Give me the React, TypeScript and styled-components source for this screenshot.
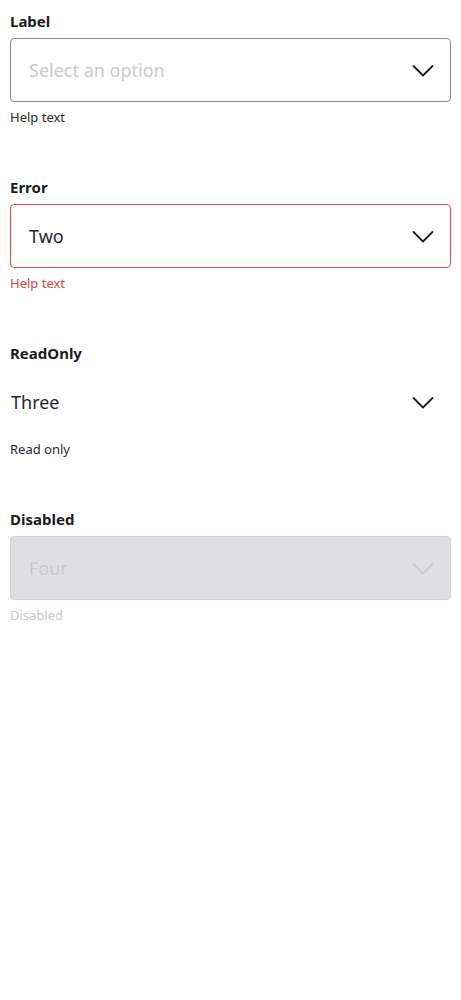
import React from "react";
import styled, { createGlobalStyle, css } from "styled-components";

const GlobalStyle = createGlobalStyle`
  html, body {
    margin: 0;
    padding: 0;
    background: #ffffff;
  }
  body {
    font-family: "Noto Sans", "Liberation Sans", sans-serif;
    color: #1f1f22;
  }
`;

type Variant = "default" | "error" | "readonly" | "disabled";

const Page = styled.div`
  padding: 11px 10px 0 10px;
  display: flex;
  flex-direction: column;
  gap: 50px;
`;

const Field = styled.div`
  display: flex;
  flex-direction: column;
`;

const Label = styled.label`
  font-size: 15px;
  font-weight: 700;
  line-height: 20px;
  margin-bottom: 7px;
  color: #1b1b1e;
`;

const Box = styled.div<{ $variant: Variant }>`
  box-sizing: border-box;
  height: 64px;
  display: flex;
  align-items: center;
  justify-content: space-between;
  padding: 0 16px 0 18px;
  border-radius: 4px;
  border: 1px solid #8c8b91;
  background: #ffffff;

  ${(p) =>
    p.$variant === "error" &&
    css`
      border-color: #e4483c;
    `}
  ${(p) =>
    p.$variant === "readonly" &&
    css`
      border-color: transparent;
      padding-left: 0;
    `}
  ${(p) =>
    p.$variant === "disabled" &&
    css`
      border-color: #d2d1d6;
      background: #dfdee3;
    `}
`;

const Value = styled.span<{ $muted?: boolean }>`
  font-size: 18px;
  line-height: 24px;
  color: ${(p) => (p.$muted ? "#c9c8cd" : "#26262a")};
`;

const Help = styled.div<{ $variant: Variant }>`
  margin-top: 5px;
  font-size: 13px;
  line-height: 20px;
  color: ${(p) =>
    p.$variant === "error"
      ? "#d9463b"
      : p.$variant === "disabled"
      ? "#c9c8cd"
      : "#2a2a2e"};
`;

const IconWrap = styled.span`
  display: flex;
  margin-top: 2px;
`;

const Chevron = ({ color }: { color: string }) => (
  <IconWrap>
    <svg width="22" height="14" viewBox="0 0 22 14" fill="none">
      <path d="M1.5 2 L11 11.5 L20.5 2" stroke={color} strokeWidth="1.8" strokeLinecap="round" strokeLinejoin="round" />
    </svg>
  </IconWrap>
);

const fields: { label: string; value: string; help: string; variant: Variant; placeholder?: boolean }[] = [
  { label: "Label", value: "Select an option", help: "Help text", variant: "default", placeholder: true },
  { label: "Error", value: "Two", help: "Help text", variant: "error" },
  { label: "ReadOnly", value: "Three", help: "Read only", variant: "readonly" },
  { label: "Disabled", value: "Four", help: "Disabled", variant: "disabled" },
];

export default function App() {
  return (
    <>
      <GlobalStyle />
      <Page>
        {fields.map((f) => (
          <Field key={f.label}>
            <Label>{f.label}</Label>
            <Box $variant={f.variant}>
              <Value $muted={f.placeholder || f.variant === "disabled"}>{f.value}</Value>
              <Chevron color={f.variant === "disabled" ? "#c9c8cd" : "#1f1f22"} />
            </Box>
            <Help $variant={f.variant}>{f.help}</Help>
          </Field>
        ))}
      </Page>
    </>
  );
}
